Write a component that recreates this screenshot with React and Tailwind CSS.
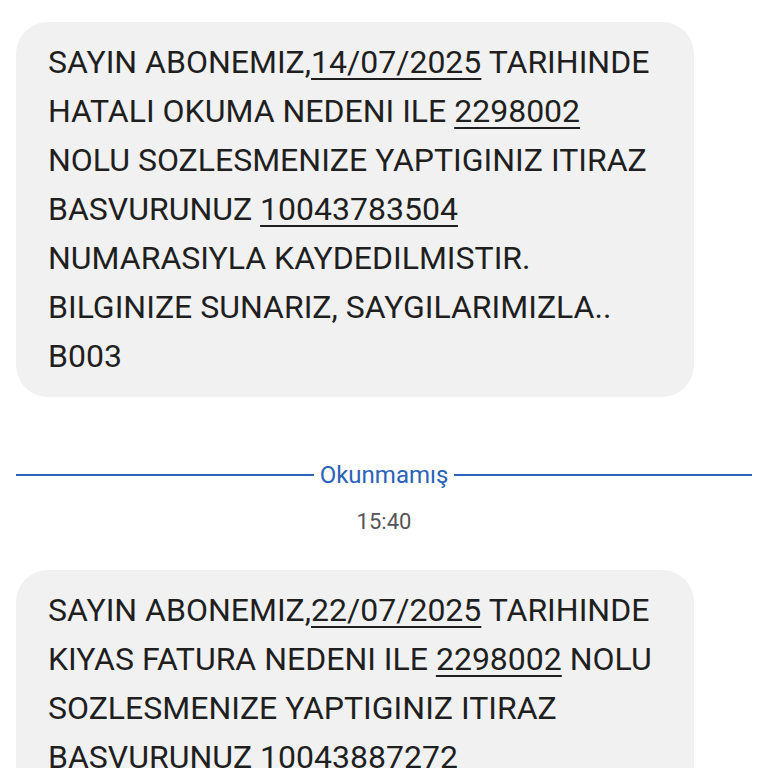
const first = [
  [{ t: "SAYIN ABONEMIZ," }, { t: "14/07/2025", u: true }, { t: " TARIHINDE" }],
  [{ t: "HATALI OKUMA NEDENI ILE " }, { t: "2298002", u: true }],
  [{ t: "NOLU SOZLESMENIZE YAPTIGINIZ ITIRAZ" }],
  [{ t: "BASVURUNUZ " }, { t: "10043783504", u: true }],
  [{ t: "NUMARASIYLA KAYDEDILMISTIR." }],
  [{ t: "BILGINIZE SUNARIZ, SAYGILARIMIZLA.." }],
  [{ t: "B003" }],
];

const second = [
  [{ t: "SAYIN ABONEMIZ," }, { t: "22/07/2025", u: true }, { t: " TARIHINDE" }],
  [{ t: "KIYAS FATURA NEDENI ILE " }, { t: "2298002", u: true }, { t: " NOLU" }],
  [{ t: "SOZLESMENIZE YAPTIGINIZ ITIRAZ" }],
  [{ t: "BASVURUNUZ " }, { t: "10043887272", u: true }],
  [{ t: "NUMARASIYLA KAYDEDILMISTIR." }],
  [{ t: "BILGINIZE SUNARIZ, SAYGILARIMIZLA.." }],
  [{ t: "B003" }],
];

const Bubble = ({ lines }) => (
  <div className="w-[678px] rounded-[32px] bg-[#f1f1f1] px-8 py-4 text-[32px] leading-[49px] text-[#1f1f1f]">
    {lines.map((line, i) => (
      <div key={i} className="whitespace-nowrap">
        {line.map((s, j) =>
          s.u ? (
            <span key={j} className="underline decoration-2 underline-offset-[5px]">
              {s.t}
            </span>
          ) : (
            <span key={j}>{s.t}</span>
          )
        )}
      </div>
    ))}
  </div>
);

export default function App() {
  return (
    <div
      className="h-[768px] overflow-hidden bg-white px-4 pt-[22px]"
      style={{ fontFamily: "Roboto, 'Noto Sans', sans-serif" }}
    >
      <Bubble lines={first} />

      {/* unread divider */}
      <div className="mt-[66px] flex items-center gap-1.5">
        <div className="h-[2px] flex-1 bg-[#2a62b8]" />
        <span className="text-[24px] leading-6 text-[#2a62b8]">Okunmamış</span>
        <div className="h-[2px] flex-1 bg-[#2a62b8]" />
      </div>

      <div className="mt-[23px] text-center text-[22px] leading-6 text-[#555]">15:40</div>

      <div className="mt-[36px]">
        <Bubble lines={second} />
      </div>
    </div>
  );
}
